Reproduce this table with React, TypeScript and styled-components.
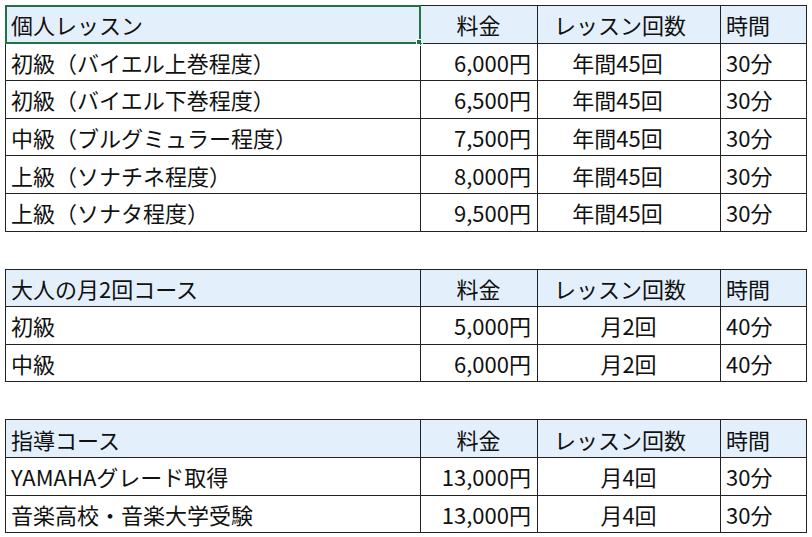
import styled, { createGlobalStyle } from "styled-components";

const GlobalStyle = createGlobalStyle`
  html, body {
    margin: 0;
    padding: 0;
    background: #ffffff;
  }
  body {
    font-family: "Noto Sans CJK JP", "Noto Sans", sans-serif;
    color: #111111;
  }
`;

const Page = styled.div`
  display: flex;
  flex-direction: column;
  gap: 37px;
  padding: 5px 0 0 5px;
  width: 802px;
`;

const Table = styled.table`
  width: 801px;
  table-layout: fixed;
  border-collapse: collapse;
  font-size: 22px;
  line-height: 1;
`;

const Row = styled.tr`
  height: 37.6px;
`;

const Cell = styled.td<{ $align?: "left" | "right" | "center"; $head?: boolean; $shift?: number }>`
  position: relative;
  border: 1px solid #222222;
  padding: 0 6px 0 5px;
  padding-right: ${(p) => (p.$shift ? `${6 + p.$shift}px` : "6px")};
  text-align: ${(p) => p.$align ?? "left"};
  background: ${(p) => (p.$head ? "#e3effb" : "#ffffff")};
  white-space: nowrap;
  vertical-align: middle;
`;

const Selection = styled.span`
  position: absolute;
  inset: -1px;
  border: 2px solid #217346;
  pointer-events: none;

  &::after {
    content: "";
    position: absolute;
    right: -4px;
    bottom: -4px;
    width: 5px;
    height: 5px;
    background: #217346;
    border: 1px solid #ffffff;
  }
`;

type Course = { name: string; price: string; count: string; time: string };

type Section = { title: string; rows: Course[]; countShift: number };

const sections: Section[] = [
  {
    title: "個人レッスン",
    countShift: 22,
    rows: [
      { name: "初級（バイエル上巻程度）", price: "6,000円", count: "年間45回", time: "30分" },
      { name: "初級（バイエル下巻程度）", price: "6,500円", count: "年間45回", time: "30分" },
      { name: "中級（ブルグミュラー程度）", price: "7,500円", count: "年間45回", time: "30分" },
      { name: "上級（ソナチネ程度）", price: "8,000円", count: "年間45回", time: "30分" },
      { name: "上級（ソナタ程度）", price: "9,500円", count: "年間45回", time: "30分" },
    ],
  },
  {
    title: "大人の月2回コース",
    countShift: 0,
    rows: [
      { name: "初級", price: "5,000円", count: "月2回", time: "40分" },
      { name: "中級", price: "6,000円", count: "月2回", time: "40分" },
    ],
  },
  {
    title: "指導コース",
    countShift: 0,
    rows: [
      { name: "YAMAHAグレード取得", price: "13,000円", count: "月4回", time: "30分" },
      { name: "音楽高校・音楽大学受験", price: "13,000円", count: "月4回", time: "30分" },
    ],
  },
];

const Columns = () => (
  <colgroup>
    <col style={{ width: 415 }} />
    <col style={{ width: 117 }} />
    <col style={{ width: 183 }} />
    <col style={{ width: 86 }} />
  </colgroup>
);

export default function App() {
  return (
    <>
      <GlobalStyle />
      <Page>
        {sections.map((s, i) => (
          <Table key={s.title}>
            <Columns />
            <tbody>
              <Row>
                <Cell $head>
                  {s.title}
                  {i === 0 && <Selection />}
                </Cell>
                <Cell $head $align="center">料金</Cell>
                <Cell $head $align="center" $shift={17}>レッスン回数</Cell>
                <Cell $head>時間</Cell>
              </Row>
              {s.rows.map((r) => (
                <Row key={r.name}>
                  <Cell>{r.name}</Cell>
                  <Cell $align="right">{r.price}</Cell>
                  <Cell $align="center" $shift={s.countShift}>{r.count}</Cell>
                  <Cell>{r.time}</Cell>
                </Row>
              ))}
            </tbody>
          </Table>
        ))}
      </Page>
    </>
  );
}
